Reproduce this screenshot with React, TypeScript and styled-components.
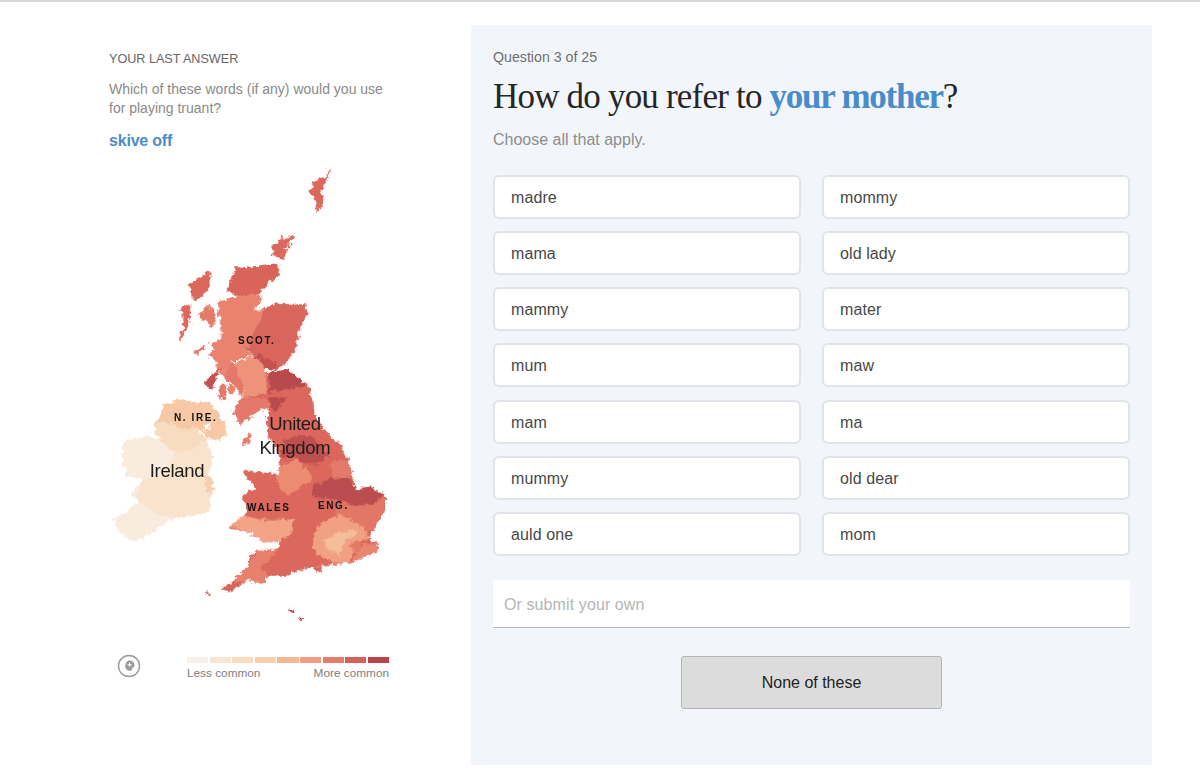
import React from "react";
import styled, { createGlobalStyle } from "styled-components";

const Global = createGlobalStyle`
  html, body { margin: 0; padding: 0; background: #fff; }
  body { font-family: "Liberation Sans", Arial, sans-serif; }
`;

const Page = styled.div`
  width: 1200px;
  height: 782px;
  overflow: hidden;
  box-sizing: border-box;
  border-top: 2px solid #d8d8d8;
  padding-top: 23px;
  display: flex;
  align-items: flex-start;
`;

const Side = styled.aside`
  width: 362px;
  margin-left: 109px;
  flex: none;
  display: flex;
  flex-direction: column;
  align-items: flex-start;
`;

const Kicker = styled.div`
  margin-top: 26px;
  font-size: 12.6px;
  line-height: 16px;
  color: #666;
`;

const Prompt = styled.p`
  margin: 13px 0 0;
  width: 285px;
  font-size: 14px;
  line-height: 18.5px;
  color: #8a8a8a;
`;

const Answer = styled.div`
  margin-top: 14px;
  font-size: 16px;
  line-height: 20px;
  font-weight: 700;
  color: #4a8cca;
  letter-spacing: -0.2px;
`;

const MapBox = styled.div`
  position: relative;
  width: 300px;
  height: 470px;
  margin: 8px 0 0 -9px;
`;

const MapSvg = styled.svg`
  display: block;
  width: 300px;
  height: 470px;
`;

const Region = styled.span<{ $x: number; $y: number }>`
  position: absolute;
  left: ${(p) => p.$x}px;
  top: ${(p) => p.$y}px;
  font-size: 10px;
  line-height: 12px;
  font-weight: 700;
  letter-spacing: 1.6px;
  color: #111;
  white-space: nowrap;
`;

const Country = styled.span<{ $x: number; $y: number }>`
  position: absolute;
  left: ${(p) => p.$x}px;
  top: ${(p) => p.$y}px;
  width: 90px;
  text-align: center;
  font-size: 18.5px;
  line-height: 24px;
  color: #1c1c1c;
  letter-spacing: -0.3px;
`;

const LegendRow = styled.div`
  margin: 28px 0 0 -1px;
  width: 281px;
  display: flex;
  align-items: flex-start;
  justify-content: space-between;
`;

const LocateIcon = styled.svg`
  width: 24px;
  height: 24px;
  flex: none;
  margin-top: -3px;
  margin-left: 9px;
`;

const Legend = styled.div`
  width: 202px;
`;

const Swatches = styled.div`
  display: flex;
  gap: 1.5px;
`;

const Swatch = styled.div<{ $c: string }>`
  flex: 1;
  height: 6px;
  background: ${(p) => p.$c};
`;

const LegendText = styled.div`
  display: flex;
  justify-content: space-between;
  margin-top: 3px;
  font-size: 11.8px;
  line-height: 14px;
  color: #808080;
`;

const Panel = styled.main`
  width: 681px;
  height: 740px;
  flex: none;
  box-sizing: border-box;
  background: #f2f6fb;
  padding: 23px 22px 0;
`;

const Counter = styled.div`
  font-size: 14.2px;
  line-height: 18px;
  color: #6f6f6f;
`;

const Title = styled.h1`
  margin: 9px 0 0;
  font-family: "Liberation Serif", "Times New Roman", serif;
  font-size: 35px;
  line-height: 44px;
  font-weight: 400;
  color: #262626;
  white-space: nowrap;
  letter-spacing: -0.8px;
`;

const Accent = styled.span`
  font-weight: 700;
  color: #4a8cca;
  letter-spacing: -1.25px;
`;

const Hint = styled.div`
  margin-top: 11px;
  font-size: 16px;
  line-height: 20px;
  color: #8d8d8d;
`;

const Options = styled.div`
  margin-top: 25px;
  display: grid;
  grid-template-columns: 308px 308px;
  column-gap: 21px;
  row-gap: 12.17px;
`;

const Option = styled.button`
  height: 44px;
  box-sizing: border-box;
  border: 2px solid #e0e3e8;
  border-radius: 6px;
  background: #fff;
  padding: 2px 16px 0;
  text-align: left;
  font-family: inherit;
  font-size: 16px;
  color: #484848;
  letter-spacing: 0.1px;
`;

const OwnInput = styled.div`
  margin-top: 24px;
  height: 48px;
  box-sizing: border-box;
  background: #fff;
  border-bottom: 1.5px solid #b9b9be;
  padding: 3px 11px 0;
  display: flex;
  align-items: center;
  font-size: 16px;
  color: #b5b5b5;
  letter-spacing: 0.1px;
`;

const NoneRow = styled.div`
  margin-top: 28px;
  display: flex;
  justify-content: center;
`;

const NoneButton = styled.button`
  width: 261px;
  height: 53px;
  box-sizing: border-box;
  border: 1px solid #b4b4b4;
  border-radius: 3px;
  background: #dcdcdc;
  padding: 2px 0 0;
  font-family: inherit;
  font-size: 16px;
  color: #222;
`;

type Shape = { c: string; p: string };

const upper: Shape[] = [
  { c: "#dc675c", p: "685,30 680,50 665,60 655,58 635,70 640,85 625,98 640,112 650,125 650,158 658,150 670,120 665,95 680,70 690,35" },
  { c: "#dc675c", p: "540,225 555,240 580,225 578,238 565,250 572,262 555,265 560,280 548,305 530,295 515,285 518,255 540,245" },
  { c: "#d9645a", p: "408,320 440,325 480,322 540,315 535,345 505,375 480,400 470,404 410,412 380,395 395,360" },
  { c: "#dc675c", p: "330,335 332,365 320,395 290,428 270,400 270,375 300,355" },
  { c: "#dc675c", p: "270,432 272,470 262,510 240,545 235,540 250,510 245,480 243,445" },
  { c: "#e5796a", p: "320,432 345,460 350,480 335,505 310,480 293,465 310,455" },
  { c: "#e9826f", p: "355,425 410,412 470,402 488,418 462,455 495,448 470,500 435,572 462,590 420,600 390,610 370,650 360,650 350,610 320,590 345,570 330,555 360,540 365,500 355,470" },
  { c: "#d9665c", p: "495,448 520,432 560,438 615,435 622,460 600,510 590,560 565,605 530,635 485,600 435,572 470,500" },
  { c: "#c6504f", p: "480,585 500,600 530,610 525,637 495,625 462,590" },
  { c: "#ef927b", p: "405,610 462,590 495,625 510,680 500,720 470,722 425,725 435,680 415,650" },
  { c: "#e4786a", p: "390,610 405,610 415,650 435,680 425,715 405,680 385,665 370,650" },
  { c: "#e4786a", p: "365,675 380,680 375,715 360,722 355,710" },
  { c: "#e9826f", p: "385,672 405,682 400,705 385,700" },
  { c: "#c6504f", p: "362,625 345,665 340,688 320,688 310,665 335,650" },
  { c: "#e4786a", p: "310,558 315,570 290,587 280,580" },
  { c: "#dc675c", p: "500,640 560,632 590,650 625,680 650,790 505,790 500,720" },
  { c: "#b84a4d", p: "500,640 560,632 590,650 612,675 600,700 560,725 530,760 505,740 500,710 510,680" },
];

const lower: Shape[] = [
  { c: "#f9ebde", p: "70,125 130,110 170,120 215,110 320,120 340,175 325,225 340,265 325,340 240,350 180,385 130,420 90,425 50,385 42,355 80,340 120,300 95,290 125,240 80,230 65,190" },
  { c: "#f9e3cd", p: "215,110 320,120 340,175 325,225 340,265 325,340 240,358 180,350 110,300 125,240 190,230 225,180" },
  { c: "#f8dcc0", p: "160,75 215,70 290,90 320,120 280,150 220,160 190,130 170,110" },
  { c: "#f6c8a5", p: "160,75 180,55 190,15 250,0 280,10 330,10 345,30 375,70 380,105 355,125 320,120 310,95 290,90 240,90 215,70" },
  { c: "#ffffff", p: "312,78 328,76 330,92 316,94" },
  { c: "#f7cfae", p: "310,230 340,235 340,285 320,275" },
  { c: "#dc675c", p: "415,5 460,-10 560,-30 625,-40 650,60 670,90 700,120 730,140 722,152 745,180 760,240 765,270 810,262 855,290 855,330 830,380 800,420 835,435 830,460 760,490 700,495 665,500 610,510 560,530 500,530 495,555 440,545 405,570 395,580 365,570 400,545 440,510 460,460 530,450 545,420 490,430 450,400 390,385 430,350 440,340 425,285 470,270 430,225 450,215 535,225 540,180 530,150 505,110 500,60 505,25 470,40 420,75 400,40" },
  { c: "#e4786a", p: "415,5 460,-5 500,0 505,25 470,40 420,75 400,40" },
  { c: "#b84a4d", p: "510,-5 560,-5 530,38 505,25" },
  { c: "#bd4f50", p: "555,120 600,108 640,115 690,170 650,195 605,190 585,170 540,175" },
  { c: "#ec8a72", p: "540,200 590,180 640,230 630,250 590,270 570,290 540,270 530,230" },
  { c: "#e47a69", p: "690,190 745,180 760,240 700,240" },
  { c: "#bb4c4f", p: "640,260 690,240 745,235 770,270 810,262 850,290 820,315 760,320 730,305 680,300 635,290" },
  { c: "#e27667", p: "760,320 820,315 855,295 850,340 825,385 800,405 760,370 700,345 725,310" },
  { c: "#f1a083", p: "640,410 665,370 720,345 790,385 805,420 770,430 750,490 700,490 655,470 635,440" },
  { c: "#f6bd9c", p: "720,400 760,390 770,405 740,420 718,470 680,450 670,420" },
  { c: "#e47a69", p: "750,435 775,425 790,455 765,465" },
  { c: "#ea8570", p: "790,435 835,435 830,460 770,485 755,490 770,465" },
  { c: "#e7816e", p: "470,455 540,450 480,510 500,520 495,555 440,545 415,550 400,545 440,510" },
  { c: "#d9645a", p: "365,570 400,545 415,550 405,570 395,580" },
  { c: "#f3a488", p: "390,380 430,350 500,365 580,360 570,410 530,430 490,430 450,400" },
  { c: "#e87f6e", p: "445,105 455,100 445,135 425,143 430,120" },
  { c: "#c6504f", p: "319,580 326,580 325,590 320,590" },
  { c: "#c6504f", p: "565,630 580,628 585,640 565,638" },
  { c: "#b84a4d", p: "590,655 605,655 606,663 595,662" },
  { c: "#dc675c", p: "638,505 665,500 667,513 650,520" },
];

const scale = ["#f7f1ea", "#f9e6d2", "#f9dcbd", "#f8cfac", "#f6b797", "#f29c80", "#e57d6b", "#d6605a", "#b9454a"];

const left = ["madre", "mama", "mammy", "mum", "mam", "mummy", "auld one"];
const right = ["mommy", "old lady", "mater", "maw", "ma", "old dear", "mom"];
const options = left.flatMap((w, i) => [w, right[i]]);

export default function App() {
  return (
    <Page>
      <Global />
      <Side>
        <Kicker>YOUR LAST ANSWER</Kicker>
        <Prompt>Which of these words (if any) would you use for playing truant?</Prompt>
        <Answer>skive off</Answer>
        <MapBox>
          <MapSvg viewBox="0 0 900 1410">
            <defs>
              <filter id="rough" x="-5%" y="-5%" width="110%" height="110%" colorInterpolationFilters="sRGB">
                <feTurbulence type="fractalNoise" baseFrequency="0.07" numOctaves="3" seed="4" result="noise" />
                <feDisplacementMap in="SourceGraphic" in2="noise" scale="22" xChannelSelector="R" yChannelSelector="G" />
                <feGaussianBlur stdDeviation="1.2" />
              </filter>
            </defs>
            <g filter="url(#rough)">
              {upper.map((s) => (
                <polygon key={s.p} points={s.p} fill={s.c} />
              ))}
              <g transform="translate(0 720)">
                {lower.map((s) => (
                  <polygon key={s.p} points={s.p} fill={s.c} />
                ))}
              </g>
            </g>
          </MapSvg>
          <Region $x={138} $y={176}>SCOT.</Region>
          <Region $x={74} $y={253}>N. IRE.</Region>
          <Region $x={147} $y={343}>WALES</Region>
          <Region $x={218} $y={341}>ENG.</Region>
          <Country $x={150} $y={253}>United</Country>
          <Country $x={150} $y={277}>Kingdom</Country>
          <Country $x={32} $y={300}>Ireland</Country>
        </MapBox>
        <LegendRow>
          <LocateIcon viewBox="0 0 24 24" fill="none">
            <circle cx="12" cy="12" r="10.5" stroke="#9a9a9a" strokeWidth="1.4" />
            <path d="M12.600 6.600c2.700 0 4.800 2 4.800 4.600 0 .9-.2 1.600-.4 2.200l-1.100-.5-1.300 3.600c-3 .9-6.300-.9-6.300-4 0-3.300 1.700-5.900 4.300-5.900z" fill="#9a9a9a" />
            <path d="M12.600 8.600v4M10.600 10.600h4" stroke="#fff" strokeWidth="1.300" />
          </LocateIcon>
          <Legend>
            <Swatches>
              {scale.map((c) => (
                <Swatch key={c} $c={c} />
              ))}
            </Swatches>
            <LegendText>
              <span>Less common</span>
              <span>More common</span>
            </LegendText>
          </Legend>
        </LegendRow>
      </Side>
      <Panel>
        <Counter>Question 3 of 25</Counter>
        <Title>
          How do you refer to <Accent>your mother</Accent>?
        </Title>
        <Hint>Choose all that apply.</Hint>
        <Options>
          {options.map((w) => (
            <Option key={w}>{w}</Option>
          ))}
        </Options>
        <OwnInput>Or submit your own</OwnInput>
        <NoneRow>
          <NoneButton>None of these</NoneButton>
        </NoneRow>
      </Panel>
    </Page>
  );
}
